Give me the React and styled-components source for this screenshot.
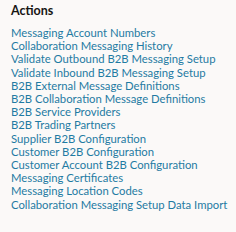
import React from "react";
import styled, { createGlobalStyle } from "styled-components";

const GlobalStyle = createGlobalStyle`
  html, body {
    margin: 0;
    padding: 0;
    background: #fbf9f8;
  }
  body {
    font-family: Lato, "Noto Sans", sans-serif;
  }
`;

const links = [
  "Messaging Account Numbers",
  "Collaboration Messaging History",
  "Validate Outbound B2B Messaging Setup",
  "Validate Inbound B2B Messaging Setup",
  "B2B External Message Definitions",
  "B2B Collaboration Message Definitions",
  "B2B Service Providers",
  "B2B Trading Partners",
  "Supplier B2B Configuration",
  "Customer B2B Configuration",
  "Customer Account B2B Configuration",
  "Messaging Certificates",
  "Messaging Location Codes",
  "Collaboration Messaging Setup Data Import",
];

const Panel = styled.section`
  width: 236px;
  height: 232px;
  box-sizing: border-box;
  padding: 3px 0 0 11px;
  background: #fbf9f8;
`;

const Title = styled.h2`
  margin: 0 0 8px;
  font-size: 12.5px;
  line-height: 15px;
  font-weight: 700;
  color: #161513;
`;

const LinkList = styled.ul`
  list-style: none;
  margin: 0;
  padding: 0;
  display: flex;
  flex-direction: column;
`;

const ActionLink = styled.a`
  display: block;
  font-size: 11.3px;
  line-height: 13.2px;
  color: #1f7ba3;
  text-decoration: none;
  white-space: nowrap;
`;

const App = () => {
  return (
    <>
      <GlobalStyle />
      <Panel>
        <Title>Actions</Title>
        <LinkList>
          {links.map((label) => (
            <li key={label}>
              <ActionLink href="#">{label}</ActionLink>
            </li>
          ))}
        </LinkList>
      </Panel>
    </>
  );
};

export default App;
